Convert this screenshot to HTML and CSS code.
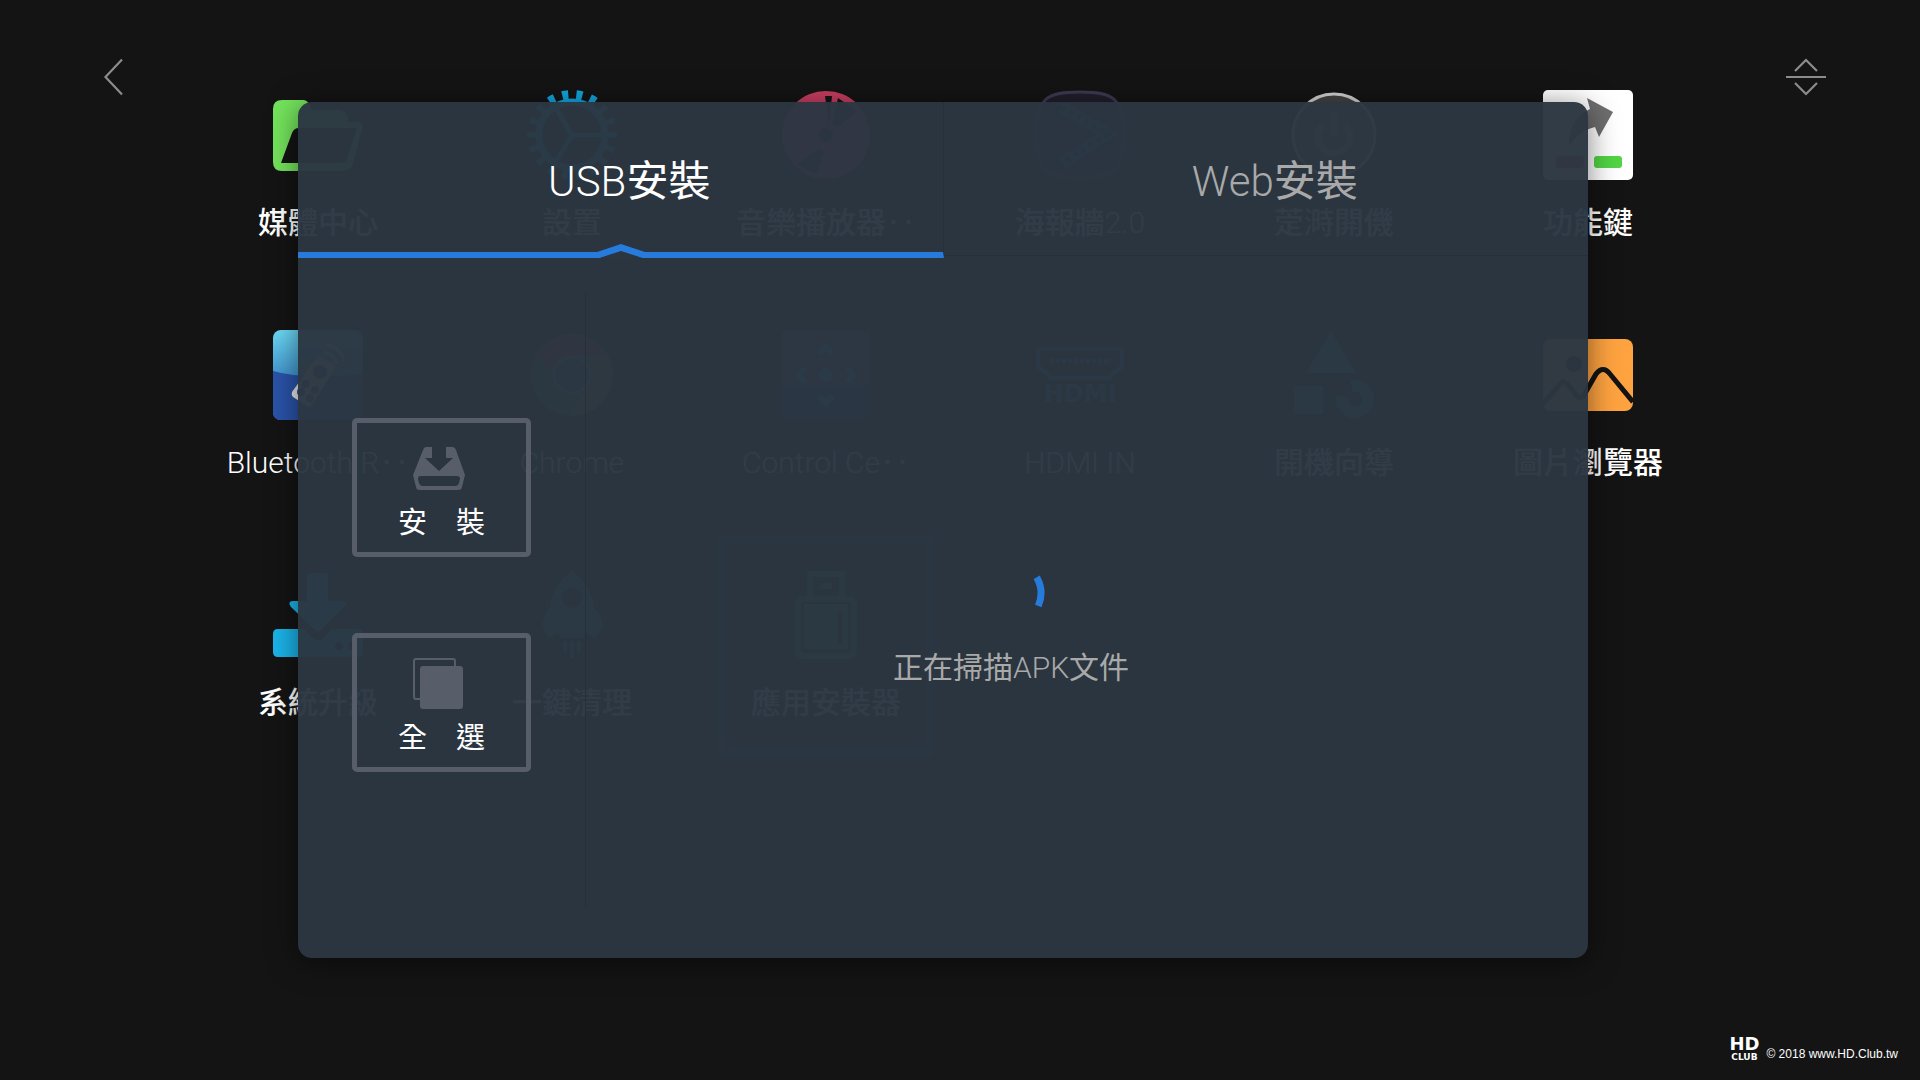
FILE: index.html
```html
<!DOCTYPE html>
<html lang="zh-Hant">
<head>
    <meta charset="UTF-8">
    <meta name="viewport" content="width=device-width, initial-scale=1.0">
    <title>應用安裝器</title>
    <link rel="stylesheet" href="styles.css">
</head>
<body>

<!-- Launcher -->
<main class="launcher">
    <button class="nav-btn back" aria-label="返回">
        <svg width="20" height="38" viewBox="0 0 20 38"><path d="M18 1.500L1.500 19L18 36.500" fill="none" stroke="#8c8c8c" stroke-width="2.200"/></svg>
    </button>

    <div class="apps">
        <div class="app">
            <svg class="icon" viewBox="0 0 90 90">
                <path fill="#74e35c" d="M9 10H30Q34 10 36 14L39 20H65Q75 20 75 30V32H84Q91 32 89 39L80 73Q78 81 70 81H9Q0 81 0 72V19Q0 10 9 10Z"/>
                <path fill="#141414" d="M8 73L19 43Q21 38 26 38H84L74 69Q73 73 69 73Z"/>
            </svg>
            <span>媒體中心</span>
        </div>
        <div class="app">
            <svg class="icon" viewBox="0 0 90 90">
                <g fill="none" stroke="#12a5e0">
                    <circle cx="45" cy="45" r="40" stroke-width="10" stroke-dasharray="6 7.963" transform="rotate(-4.300 45 45)"/>
                    <circle cx="45" cy="45" r="33" stroke-width="7"/>
                    <path d="M45 45H76M45 45L29 18M45 45L29 72" stroke-width="5"/>
                </g>
            </svg>
            <span>設置</span>
        </div>
        <div class="app">
            <svg class="icon" viewBox="0 0 90 90">
                <circle cx="45" cy="45" r="44" fill="#c83e60"/>
                <path fill="#141414" d="M44 6H51L48 36ZM57 8L76 21L57 37L51 34ZM17 73L38 59L43 62L36 84Q24 81 17 73Z"/>
                <circle cx="45" cy="45" r="7" fill="#141414"/>
            </svg>
            <span>音樂播放器<i class="dots">‥</i></span>
        </div>
        <div class="app">
            <svg class="icon" viewBox="0 0 90 90">
                <path d="M1 45C1 8 12 2 45 2S89 8 89 45S78 88 45 88S1 82 1 45Z" fill="#201f2b" stroke="#3c3a50" stroke-width="3"/>
                <path d="M26 17L73 44L27 73" fill="none" stroke="#155a80" stroke-width="11"/>
                <path d="M26 17L73 44L27 73" fill="none" stroke="#201f2b" stroke-width="5" stroke-dasharray="5 4"/>
            </svg>
            <span>海報牆<b class="latin">2.0</b></span>
        </div>
        <div class="app">
            <svg class="icon" viewBox="0 0 90 90">
                <circle cx="45" cy="45" r="41" fill="#444" stroke="#d0d0d0" stroke-width="3"/>
                <path d="M34 35A16 16 0 1 0 56 35M45 23V46" fill="none" stroke="#999" stroke-width="7"/>
            </svg>
            <span>萣溡閞僟</span>
        </div>
        <div class="app">
            <svg class="icon" viewBox="0 0 90 90">
                <rect width="90" height="90" rx="5" fill="#fff"/>
                <path fill="#6e6e6e" d="M44 8L70 22L56 47L52 37Q35 41 26 57Q25 29 47 19Z"/>
                <rect x="13" y="66" width="28" height="12" rx="3" fill="#e0485c"/>
                <rect x="51" y="66" width="28" height="12" rx="3" fill="#52d444"/>
            </svg>
            <span>功能鍵</span>
        </div>

        <div class="app">
            <svg class="icon" viewBox="0 0 90 90">
                <defs>
                    <linearGradient id="sky" x1="0" y1="0" x2="0" y2="1">
                        <stop offset="0" stop-color="#6ddcf8"/>
                        <stop offset=".5" stop-color="#4396cf"/>
                    </linearGradient>
                </defs>
                <rect width="90" height="90" rx="8" fill="url(#sky)"/>
                <path fill="#2a53a9" d="M0 41Q30 50 90 44V82Q90 90 82 90H8Q0 90 0 82Z"/>
                <path fill="#e6e6e6" d="M19 62L44 27Q46 25 49 27L61 35Q63 37 61 40L39 75Q37 78 34 76L20 67Q18 65 19 62Z"/>
                <g fill="#2a53a9"><circle cx="47" cy="42" r="7"/><circle cx="33" cy="54" r="4"/><circle cx="42" cy="60" r="4"/><circle cx="28" cy="62" r="4"/><circle cx="37" cy="68" r="4"/></g>
                <path d="M51 22Q61 24 64 34M53 14Q68 18 71 31" fill="none" stroke="#e6e6e6" stroke-width="3"/>
            </svg>
            <span class="latin">Bluetooth R<i class="dots">‥</i></span>
        </div>
        <div class="app">
            <svg class="icon" viewBox="0 0 90 90">
                <circle cx="45" cy="45" r="41" fill="#2c7058"/>
                <path fill="#b03a40" d="M10 24A41 41 0 0 1 80 26H45Q30 27 26 45Z"/>
                <path fill="#7c7038" d="M80 26H55Q66 36 62 52L44 86A41 41 0 0 0 80 26Z"/>
                <circle cx="45" cy="45" r="18" fill="#24607c" stroke="#6a9a9a" stroke-width="3"/>
            </svg>
            <span class="latin">Chrome</span>
        </div>
        <div class="app">
            <svg class="icon" viewBox="0 0 90 90">
                <rect x="1" y="1" width="88" height="88" rx="5" fill="#3a3a88"/>
                <path fill="#70306a" d="M6 1H84Q89 1 89 6V56H1V6Q1 1 6 1Z"/>
                <path d="M40 22L45 17L50 22M22 40L17 45L22 50M68 40L73 45L68 50M40 68L45 73L50 68" fill="none" stroke="#18b4d0" stroke-width="6" stroke-linecap="round"/>
                <circle cx="45" cy="45" r="7" fill="#18b4d0"/>
            </svg>
            <span class="latin">Control Ce<i class="dots">‥</i></span>
        </div>
        <div class="app">
            <svg class="icon" viewBox="0 0 90 90">
                <path d="M5 19H85Q87 19 87 22V37L81 41L74 48H16L9 41L3 37V22Q3 19 5 19Z" fill="none" stroke="#1c86ac" stroke-width="4"/>
                <path d="M15 31H76" stroke="#1c86ac" stroke-width="5" stroke-dasharray="4 2"/>
                <text x="45" y="72" text-anchor="middle" class="hdmi">HDMI</text>
            </svg>
            <span class="latin">HDMI IN</span>
        </div>
        <div class="app">
            <svg class="icon" viewBox="0 0 90 90">
                <path fill="#248488" d="M42 1L67 43H17ZM5 56H34V84H5Z"/>
                <circle cx="66" cy="69" r="13" fill="none" stroke="#248488" stroke-width="12" stroke-dasharray="67 15" transform="rotate(-105 66 69)"/>
            </svg>
            <span>開機向導</span>
        </div>
        <div class="app">
            <svg class="icon" viewBox="0 0 90 90">
                <rect y="9" width="90" height="72" rx="8" fill="#ffa340"/>
                <circle cx="31" cy="34" r="8" fill="#141414"/>
                <path d="M0 74L17 54Q20 50 24 54L35 67Q38 69 41 65L53 44Q60 35 67 44L90 72" fill="none" stroke="#141414" stroke-width="5"/>
            </svg>
            <span>圖片瀏覽器</span>
        </div>

        <div class="app">
            <svg class="icon" viewBox="0 0 90 90">
                <path fill="#1bb4e9" d="M39 3H52Q55 3 55 6V31H69Q76 31 72 36L48 60Q45 63 42 60L18 37Q14 31 20 31H34V6Q34 3 39 3Z"/>
                <path fill="#1bb4e9" d="M5 59H31L41 69Q45 72 49 69L59 59H85Q90 59 90 64V82Q90 87 85 87H5Q0 87 0 82V64Q0 59 5 59Z"/>
                <circle cx="66" cy="76" r="4" fill="#141414"/><circle cx="79" cy="76" r="4" fill="#141414"/>
            </svg>
            <span>系統升級</span>
        </div>
        <div class="app">
            <svg class="icon" viewBox="0 0 90 90">
                <path fill="#2a84a8" d="M45 1Q65 16 67 38Q76 46 75 57Q72 65 67 68L59 62L56 68H34L31 62L23 68Q16 63 15 55Q15 46 23 38Q25 14 45 1Z"/>
                <circle cx="45" cy="28" r="10" fill="#141414"/>
                <path d="M38 71V82M45 71V88M52 71V82" stroke="#2a84a8" stroke-width="4"/>
            </svg>
            <span>一鍵清理</span>
        </div>
        <div class="app selected">
            <svg class="icon" viewBox="0 0 90 90">
                <g fill="none" stroke="#2c8468" stroke-width="6">
                    <path d="M29 27V4H61V27"/>
                    <rect x="17" y="29" width="56" height="57" rx="5"/>
                </g>
                <path fill="#2c8468" d="M39 13H51V19H39ZM23 34H67V79H23Z"/>
                <path d="M59 43V72" stroke="#141414" stroke-width="5" stroke-linecap="round"/>
            </svg>
            <span>應用安裝器</span>
        </div>
    </div>

    <button class="nav-btn sort" aria-label="排序">
        <svg width="40" height="38" viewBox="0 0 40 38"><path d="M9 13L20 2L31 13M0 19H40M9 25L20 36L31 25" fill="none" stroke="#8c8c8c" stroke-width="2.200"/></svg>
    </button>
</main>

<!-- Installer dialog -->
<div class="overlay">
    <section class="dialog" role="dialog" aria-label="應用安裝器">
        <nav class="tabs">
            <button class="tab active"><span class="latin">USB</span>安裝
                <svg class="marker" width="52" height="14" viewBox="0 0 52 14">
                    <path fill="#2b3641" d="M4 14L26 6L48 14Z"/>
                    <path fill="#267bdd" d="M0 8H2L26 0L50 8H52V14H48L26 7L4 14H0Z"/>
                </svg>
            </button>
            <button class="tab"><span class="latin">Web</span>安裝</button>
        </nav>
        <div class="content">
            <aside class="actions">
                <button class="action">
                    <svg width="52" height="52" viewBox="0 0 52 52">
                        <path fill="#575d69" fill-rule="evenodd" d="M13 5H19V16H12L26 29L40 16H33V5H39Q42 5 43 8L52 33L49 45Q49 48 45 48H7Q3 48 3 45L0 33L10 8Q11 5 13 5ZM8 34Q5 34 5 37L6 41Q7 44 10 44H42Q45 44 46 41L47 37Q47 34 44 34Z"/>
                    </svg>
                    <span>安　裝</span>
                </button>
                <button class="action">
                    <svg width="52" height="52" viewBox="0 0 52 52">
                        <path d="M7 42H3Q1 42 1 40V4Q1 2 3 2H40Q42 2 42 4V9" fill="none" stroke="#575d69" stroke-width="2"/>
                        <rect x="7" y="9" width="43" height="43" rx="3" fill="#575d69"/>
                    </svg>
                    <span>全　選</span>
                </button>
            </aside>
            <div class="scan" role="status">
                <svg width="72" height="72" viewBox="0 0 72 72"><path d="M61.700 17.300A32.500 32.500 0 0 1 63.300 46" fill="none" stroke="#267bdd" stroke-width="7"/></svg>
                <p>正在掃描<span class="latin">APK</span>文件</p>
            </div>
        </div>
    </section>
</div>

<footer class="credit">
    <div class="logo"><b>HD</b><small>CLUB</small></div>
    <span>© 2018 www.HD.Club.tw</span>
</footer>

</body>
</html>
```
FILE: styles.css
```css
* {
    box-sizing: border-box;
}
body {
    font-family: Roboto, "Noto Sans CJK TC", sans-serif;
    background-color: #141414;
    color: white;
    min-height: 100vh;
    margin: 0;
    position: relative;
}
button {
    background: none;
    border: none;
    padding: 0;
    color: inherit;
    font-family: inherit;
    cursor: pointer;
}
svg {
    display: block;
}
p {
    margin: 0;
}
.latin {
    font-weight: 300;
}
/* Launcher */
.launcher {
    display: flex;
    align-items: flex-start;
    padding: 56px 94px 0 104px;
}
.nav-btn {
    display: flex;
    padding-top: 2px;
}
.back {
    width: 87px;
}
.sort {
    width: 111px;
    justify-content: flex-end;
}
.apps {
    flex: 1;
    display: grid;
    grid-template-columns: repeat(6, 1fr);
    row-gap: 20px;
}
.app {
    display: flex;
    flex-direction: column;
    align-items: center;
    justify-self: center;
    width: 218px;
    height: 220px;
    padding-top: 26px;
    border: 8px solid transparent;
    border-radius: 8px;
    font-size: 30px;
    font-weight: 500;
    line-height: 40px;
    white-space: nowrap;
}
.app.selected {
    border-color: #14446a;
}
.dots {
    font-family: "Noto Sans CJK TC", sans-serif;
    font-style: normal;
    font-weight: 500;
    line-height: 0;
}
.icon {
    width: 90px;
    height: 90px;
    margin-bottom: 23px;
}
.hdmi {
    font: bold 24px "DejaVu Sans", sans-serif;
    fill: #1c86ac;
}
/* Dialog */
.overlay {
    position: absolute;
    top: 0;
    left: 0;
    width: 100%;
    height: 100%;
    display: flex;
    padding: 102px 332px 122px 298px;
}
.dialog {
    flex: 1;
    display: flex;
    flex-direction: column;
    background-color: rgba(43, 55, 66, 0.973);
    border-radius: 14px;
    box-shadow: 0 4px 30px rgba(0, 0, 0, 0.5);
}
.tabs {
    display: flex;
    height: 156px;
}
.tab {
    flex: 1;
    position: relative;
    padding: 0 0 2px 18px;
    border-bottom: 1px solid #25303a;
    color: #a9a9a9;
    font-size: 42px;
    margin-bottom: 2px;
}
.tab.active {
    color: white;
    margin-bottom: 0;
    padding-bottom: 0;
    border-bottom: 6px solid #267bdd;
    border-right: 1px solid #25303a;
}
.marker {
    position: absolute;
    left: calc(50% - 25px);
    bottom: -6px;
}
.content {
    flex: 1;
    display: flex;
    padding: 34px 0 50px;
}
.actions {
    width: 288px;
    display: flex;
    flex-direction: column;
    align-items: center;
    gap: 76px;
    padding-top: 126px;
    border-right: 1px solid #25303a;
}
.action {
    width: 179px;
    height: 139px;
    display: flex;
    flex-direction: column;
    align-items: center;
    padding-top: 19px;
    border: 5px solid #575d69;
    border-radius: 5px;
    font-size: 29px;
    line-height: 40px;
}
.action svg {
    margin: 0 6px 9px 0;
}
.scan {
    flex: 1;
    display: flex;
    flex-direction: column;
    align-items: center;
    gap: 16px;
    padding: 268px 152px 0 0;
    color: #a9a9a9;
    font-size: 30px;
    line-height: 40px;
}
/* Footer */
.credit {
    position: absolute;
    right: 22px;
    bottom: 18px;
    display: flex;
    align-items: flex-end;
    gap: 4px;
    font: 12px/16px "Liberation Sans", sans-serif;
}
.logo {
    display: flex;
    flex-direction: column;
    align-items: center;
    font-family: "DejaVu Sans", sans-serif;
    width: 36px;
}
.logo b {
    font-size: 18px;
    line-height: 16px;
}
.logo small {
    font-size: 9px;
    font-weight: bold;
    line-height: 10px;
}
```
